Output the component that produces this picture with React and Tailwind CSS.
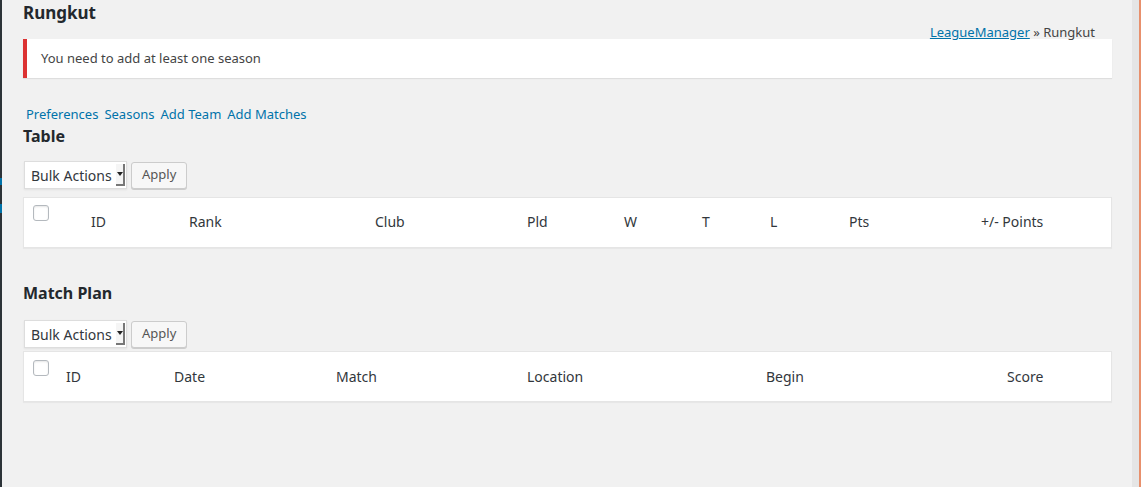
import React from 'react';

const font = { fontFamily: '"Noto Sans", "Open Sans", sans-serif' };

function Checkbox() {
  return <span className="block w-4 h-4 rounded-[3px] border border-[#b4b9be] bg-white shadow-[inset_0_1px_2px_rgba(0,0,0,0.1)]" />;
}

function BulkBar() {
  return (
    <div className="flex items-center gap-1 pl-px">
      <div className="flex items-stretch h-[28px] w-[103px] border border-[#ddd] bg-white shadow-[0_1px_2px_rgba(0,0,0,0.07)]">
        <span className="flex-1 flex items-center pl-[6px] text-[14px] text-[#32373c]">Bulk Actions</span>
        <span className="w-[9px] my-[2px] mr-[1px] flex items-center justify-center bg-[#f5f5f5] border-r-2 border-b-2 border-[#777]">
          <span className="block w-0 h-0 border-l-[3px] border-r-[3px] border-t-[4px] border-l-transparent border-r-transparent border-t-[#222]" />
        </span>
      </div>
      <button className="h-[27px] px-[10px] rounded-[3px] border border-[#ccc] bg-[#f7f7f7] text-[13px] text-[#555] shadow-[0_1px_0_#ccc]">Apply</button>
    </div>
  );
}

function HeaderTable({ first, cols, mt, pt, cbt }) {
  return (
    <div className={`bg-white border border-[#e5e5e5] shadow-[0_1px_1px_rgba(0,0,0,0.04)] h-[51px] flex ${mt}`}>
      <div className={`pl-[9px] ${cbt}`} style={{ width: first }}>
        <Checkbox />
      </div>
      {cols.map(([label, w]) => (
        <div key={label} className={`${pt} text-[14px] text-[#32373c] leading-[18px]`} style={{ width: w }}>
          {label}
        </div>
      ))}
    </div>
  );
}

export default function App() {
  return (
    <div className="flex h-[487px] bg-[#f1f1f1] overflow-hidden" style={font}>
      <div className="w-[2px] bg-[#2c3338] flex flex-col">
        <div className="h-[178px]" />
        <div className="h-[7px] bg-[#0073aa]" />
        <div className="h-[19px]" />
        <div className="h-[9px] bg-[#0073aa]" />
      </div>
      <div className="flex-1 pl-[21px] pr-[20px]">
        <h1 className="text-[17px] font-bold text-[#23282d] leading-[22px] pt-[2px]">Rungkut</h1>
        <div className="relative z-10 text-right pr-[17px] mt-0 -mb-[2px] text-[13px] leading-[17px] text-[#444]">
          <a className="text-[#0073aa] underline">LeagueManager</a> » Rungkut
        </div>
        <div className="bg-white border-l-4 border-[#dc3232] shadow-[0_1px_1px_rgba(0,0,0,0.08)] h-[39px] flex items-center pl-[14px] text-[13px] text-[#444]">
          You need to add at least one season
        </div>
        <div className="flex gap-[6px] pl-[3px] mt-[28px] text-[13px] leading-[17px] text-[#0073aa]">
          <a>Preferences</a>
          <a>Seasons</a>
          <a>Add Team</a>
          <a>Add Matches</a>
        </div>
        <h2 className="text-[16px] font-bold text-[#23282d] leading-[22px] mt-[2px]">Table</h2>
        <div className="mt-[14px]">
          <BulkBar />
        </div>
        <HeaderTable
          mt="mt-[8px]"
          pt="pt-[15px]"
          cbt="pt-[7px]"
          first={67}
          cols={[['ID', 98], ['Rank', 186], ['Club', 152], ['Pld', 97], ['W', 78], ['T', 68], ['L', 79], ['Pts', 132], ['+/- Points', 120]]}
        />
        <h2 className="text-[16px] font-bold text-[#23282d] leading-[22px] mt-[34px]">Match Plan</h2>
        <div className="mt-[16px]">
          <BulkBar />
        </div>
        <HeaderTable
          mt="mt-[3px]"
          pt="pt-[16px]"
          cbt="pt-[8px]"
          first={42}
          cols={[['ID', 108], ['Date', 162], ['Match', 191], ['Location', 239], ['Begin', 241], ['Score', 80]]}
        />
      </div>
      <div className="w-[7px] bg-[#e5e5e5]" />
      <div className="w-[2px] bg-[#e8906c]" />
    </div>
  );
}
